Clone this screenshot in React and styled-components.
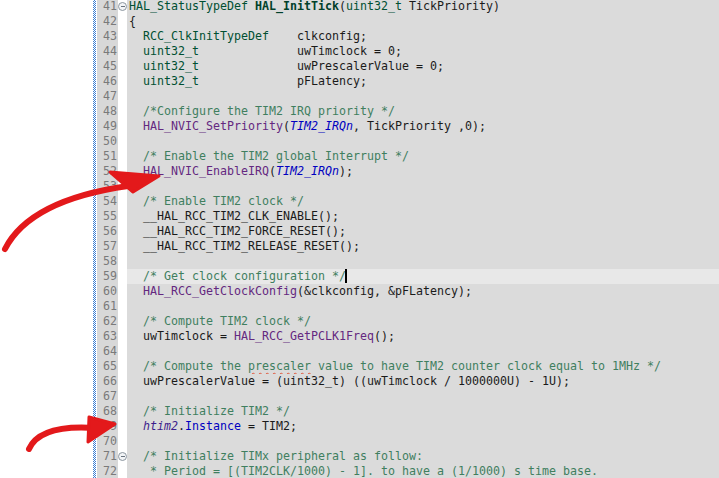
import styled, { createGlobalStyle, css } from "styled-components"

const GlobalStyle = createGlobalStyle`
  html, body {
    margin: 0;
    padding: 0;
    background: #fff;
    overflow: hidden;
  }
`

// token kinds: t = type, d = function declaration, f = function call,
// m = macro / enum, c = comment, g = global var, p = field, s = misspelled
const lines = [
  { n: 41, fold: true, code: [["t", "HAL_StatusTypeDef"], ["", " "], ["d", "HAL_InitTick"], ["", "("], ["t", "uint32_t"], ["", " TickPriority)"]] },
  { n: 42, code: [["", "{"]] },
  { n: 43, code: [["", "  "], ["t", "RCC_ClkInitTypeDef"], ["", "    clkconfig;"]] },
  { n: 44, code: [["", "  "], ["t", "uint32_t"], ["", "              uwTimclock = 0;"]] },
  { n: 45, code: [["", "  "], ["t", "uint32_t"], ["", "              uwPrescalerValue = 0;"]] },
  { n: 46, code: [["", "  "], ["t", "uint32_t"], ["", "              pFLatency;"]] },
  { n: 47, code: [] },
  { n: 48, code: [["", "  "], ["c", "/*Configure the TIM2 IRQ priority */"]] },
  { n: 49, code: [["", "  "], ["f", "HAL_NVIC_SetPriority"], ["", "("], ["m", "TIM2_IRQn"], ["", ", TickPriority ,0);"]] },
  { n: 50, code: [] },
  { n: 51, code: [["", "  "], ["c", "/* Enable the TIM2 global Interrupt */"]] },
  { n: 52, code: [["", "  "], ["f", "HAL_NVIC_EnableIRQ"], ["", "("], ["m", "TIM2_IRQn"], ["", ");"]] },
  { n: 53, code: [] },
  { n: 54, code: [["", "  "], ["c", "/* Enable TIM2 clock */"]] },
  { n: 55, code: [["", "  __HAL_RCC_TIM2_CLK_ENABLE();"]] },
  { n: 56, code: [["", "  __HAL_RCC_TIM2_FORCE_RESET();"]] },
  { n: 57, code: [["", "  __HAL_RCC_TIM2_RELEASE_RESET();"]] },
  { n: 58, code: [] },
  { n: 59, current: true, cursor: true, code: [["", "  "], ["c", "/* Get clock configuration */"]] },
  { n: 60, code: [["", "  "], ["f", "HAL_RCC_GetClockConfig"], ["", "(&clkconfig, &pFLatency);"]] },
  { n: 61, code: [] },
  { n: 62, code: [["", "  "], ["c", "/* Compute TIM2 clock */"]] },
  { n: 63, code: [["", "  uwTimclock = "], ["f", "HAL_RCC_GetPCLK1Freq"], ["", "();"]] },
  { n: 64, code: [] },
  { n: 65, code: [["", "  "], ["c", "/* Compute the "], ["s", "prescaler"], ["c", " value to have TIM2 counter clock equal to 1MHz */"]] },
  { n: 66, code: [["", "  uwPrescalerValue = (uint32_t) ((uwTimclock / 1000000U) - 1U);"]] },
  { n: 67, code: [] },
  { n: 68, code: [["", "  "], ["c", "/* Initialize TIM2 */"]] },
  { n: 69, code: [["", "  "], ["g", "htim2"], ["", "."], ["p", "Instance"], ["", " = TIM2;"]] },
  { n: 70, code: [] },
  { n: 71, fold: true, code: [["", "  "], ["c", "/* Initialize TIMx peripheral as follow:"]] },
  { n: 72, code: [["", "   "], ["c", "* Period = [(TIM2CLK/1000) - 1]. to have a (1/1000) s time base."]] },
]

const App = () => {
  return (
    <>
      <GlobalStyle />
      <Screen>
        <Blank />
        <Ruler />
        <Editor>
          {lines.map(line => (
            <Row key={line.n}>
              <LineNo>{line.n}</LineNo>
              <Fold>{line.fold && <FoldIcon />}</Fold>
              <Code $current={line.current}>
                {line.code.map(([kind, text], i) => (
                  <Tok key={i} $kind={kind}>{text}</Tok>
                ))}
                {line.cursor && <Caret />}
              </Code>
            </Row>
          ))}
        </Editor>
        <Marks viewBox="0 0 719 478" width="719" height="478">
          <g fill="none" stroke="#e3191b" strokeWidth="6" strokeLinecap="round">
            <path d="M5 249 Q 30 200 128 186" />
            <path d="M29 449 Q 40 424 96 428" />
          </g>
          <g fill="#e3191b" stroke="#e3191b" strokeWidth="3" strokeLinejoin="round">
            <polygon points="110,172 159,176 133,192" />
            <polygon points="89,417 115,424 88,442" />
          </g>
        </Marks>
      </Screen>
    </>
  )
}

const Screen = styled.div`
  position: relative;
  display: flex;
  width: 719px;
  height: 478px;
  overflow: hidden;
  font-family: "DejaVu Sans Mono", "Liberation Mono", monospace;
  font-size: 11.63px;
`

const Blank = styled.div`
  width: 93px;
  flex: none;
  background: #fff;
`

const Ruler = styled.div`
  width: 3px;
  flex: none;
  background: repeating-conic-gradient(#3c7fd4 0 25%, #fff 0 50%) 0 0 / 2px 2px;
  margin-right: 1px;
`

const Editor = styled.div`
  flex: 1;
  display: flex;
  flex-direction: column;
  margin-top: -1.5px;
`

const Row = styled.div`
  display: grid;
  grid-template-columns: 21px 9px 1fr;
  height: 15px;
  line-height: 15px;
`

const LineNo = styled.div`
  background: #d8d8d8;
  color: #7a7a7a;
  text-align: right;
  padding-right: 1px;
`

const Fold = styled.div`
  background: #fff;
  display: flex;
  align-items: center;
`

const FoldIcon = styled.span`
  position: relative;
  width: 7px;
  height: 7px;
  border: 1px solid #8c96a0;
  border-radius: 50%;
  background: #f2f4f6;
  margin-left: 0;
  &::after {
    content: "";
    position: absolute;
    left: 1.5px;
    right: 1.5px;
    top: 3px;
    height: 1px;
    background: #6a7480;
  }
`

const Code = styled.div`
  background: ${p => (p.$current ? "#e8e8e8" : "#dbdbdb")};
  padding-left: 2px;
  white-space: pre;
  color: #1a1a1a;
`

const kindStyles = {
  t: css`color: #005032;`,
  d: css`color: #00402a; font-weight: bold;`,
  f: css`color: #642880;`,
  m: css`color: #0000c0; font-style: italic;`,
  c: css`color: #3f7f5f;`,
  g: css`color: #3b1c8c; font-style: italic;`,
  p: css`color: #0000c0;`,
  s: css`
    color: #3f7f5f;
    text-decoration: underline wavy #e0553a;
    text-decoration-thickness: 1px;
    text-underline-offset: 2px;
  `,
}

const Tok = styled.span`
  ${p => kindStyles[p.$kind]}
`

const Caret = styled.span`
  display: inline-block;
  width: 2px;
  height: 14px;
  background: #000;
  vertical-align: middle;
  margin-left: -1px;
`

const Marks = styled.svg`
  position: absolute;
  left: 0;
  top: 0;
  pointer-events: none;
`

export default App
